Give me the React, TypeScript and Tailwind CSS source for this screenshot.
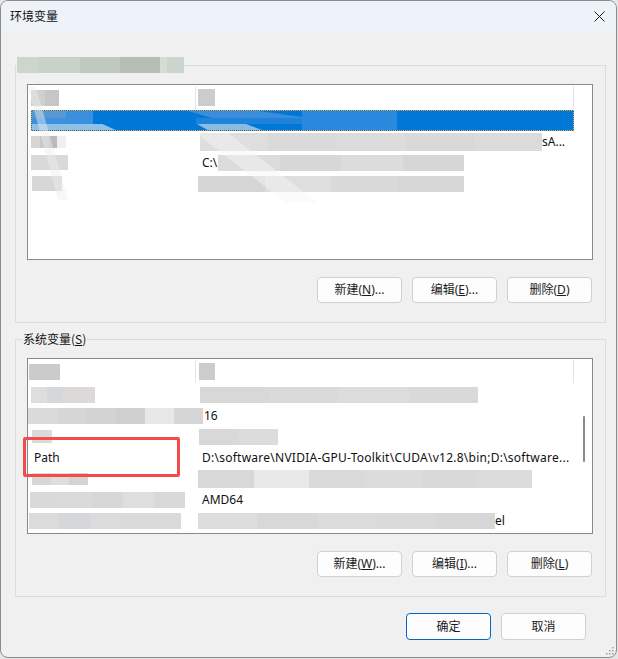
import React from "react";

type BlurProps = { w: number; h?: number; ml?: number; cols?: string[] };

// pixelated redaction block
function Blur({ w, h = 16, ml = 0, cols = ["#d9d9d9"] }: BlurProps) {
  return (
    <div className="flex shrink-0" style={{ width: w, height: h, marginLeft: ml }}>
      {cols.map((c, i) => (
        <div key={i} className="flex-1 h-full" style={{ background: c }} />
      ))}
    </div>
  );
}

function Row({
  c1,
  c2,
  header = false,
}: {
  c1: React.ReactNode;
  c2: React.ReactNode;
  header?: boolean;
}) {
  return (
    <div className={`flex ml-[3px] w-[543px] ${header ? "h-[25px]" : "h-[21px]"}`}>
      <div
        className={`w-[165px] shrink-0 flex items-center ${
          header ? "border-r border-[#e5e5e5] my-[1px]" : ""
        }`}
      >
        {c1}
      </div>
      <div
        className={`flex-1 flex items-center min-w-0 ${
          header ? "border-r border-[#e5e5e5] my-[1px]" : ""
        }`}
      >
        {c2}
      </div>
    </div>
  );
}

function Btn({ children, primary = false, tall = false }: { children: React.ReactNode; primary?: boolean; tall?: boolean }) {
  return (
    <button
      className={`w-[85px] ${tall ? "h-[27px]" : "h-[26px]"} rounded-[4px] bg-[#fdfdfd] text-[12px] text-[#1b1b1b] flex items-center justify-center border ${
        primary ? "border-[#0067c0]" : "border-[#d0d0d0]"
      }`}
    >
      {children}
    </button>
  );
}

function T({ children, ml = 0, wide = false }: { children: React.ReactNode; ml?: number; wide?: boolean }) {
  return (
    <span
      className={`text-[12px] text-[#111] whitespace-nowrap leading-none ${wide ? "tracking-[0.25px]" : ""}`}
      style={{ marginLeft: ml }}
    >
      {children}
    </span>
  );
}

function SelectedRow() {
  return (
    <div className="relative ml-[3px] w-[543px] h-[21px] bg-[#0078d7] border border-dotted border-[#e9a64a] overflow-hidden">
      <div className="absolute left-0 top-0 w-[34px] h-[7px] bg-[#5797d4]" />
      <div className="absolute left-0 top-[7px] w-[34px] h-[7px] bg-[#3d92df]" />
      <div className="absolute left-[34px] top-0 w-[27px] h-[13px] bg-[#3a8fdf]" />
      <div className="absolute left-0 top-[13px] w-[88px] h-[8px] bg-[#8ec0e8] [clip-path:polygon(0_0,80%_0,100%_100%,0_100%)]" />
      <div className="absolute left-[156px] top-0 w-[120px] h-[7px] bg-[#3a8cdc] [clip-path:polygon(0_0,60%_0,100%_100%,20%_100%)]" />
      <div className="absolute left-[165px] top-[13px] w-[70px] h-[8px] bg-[#8abbe5] [clip-path:polygon(0_0,70%_0,100%_100%,20%_100%)]" />
      <div className="absolute left-[270px] top-0 w-[95px] h-[19px] bg-[#2a89dd]" />
      <div className="absolute left-[164px] top-[7px] w-[106px] h-[6px] bg-[#1f83da]" />
    </div>
  );
}

export default function App() {
  return (
    <div className="w-[618px] h-[659px] bg-[#e6e6e6] font-['Noto_Sans','Noto_Sans_CJK_SC',sans-serif] text-[#111]">
      <div className="w-[617px] h-[658px] rounded-[8px] border border-[#8c8c8c] bg-[#f0f0f0] overflow-hidden flex flex-col relative">
        {/* title bar */}
        <div className="h-[30px] bg-[#eef3f9] flex items-center justify-between pl-[9px] pr-[10px] shrink-0">
          <span className="text-[12px] font-['Noto_Sans_CJK_SC',sans-serif] text-[#111]">环境变量</span>
          <svg width="11" height="11" viewBox="0 0 11 11" className="mr-[1px]">
            <path d="M0.5 0.5 L10.5 10.5 M10.5 0.5 L0.5 10.5" stroke="#1a1a1a" strokeWidth="1" />
          </svg>
        </div>

        {/* user variables group */}
        <div className="relative ml-[14px] mt-[34px] w-[591px] h-[258px] border border-[#dcdcdc] pt-[18px] pl-[11px] pr-[13px] flex flex-col">
          <div className="absolute left-[1px] top-[-9px] flex w-[167px] h-[16px]">
            <div className="w-[22px] bg-[#cdd6ce]" />
            <div className="w-[41px] bg-[#c9d2ca]" />
            <div className="w-[40px] bg-[#c0c9c1]" />
            <div className="w-[40px] bg-[#b5bdb5]" />
            <div className="w-[7px] bg-[#d5ddd6]" />
            <div className="w-[17px] bg-[#ccd5cd]" />
          </div>

          <div className="relative w-[566px] h-[176px] bg-white border border-[#858a91] overflow-hidden">
            <Row
              header
              c1={<Blur w={28} h={16} ml={0} cols={["#cfcfcf", "#c6c6c6"]} />}
              c2={<Blur w={17} h={17} ml={2} cols={["#cccccc"]} />}
            />
            <SelectedRow />
            <Row
              c1={<Blur w={35} h={12} cols={["#d8d4d3", "#c9c7c9", "#bcb9bb", "#f0f0f0"]} />}
              c2={
                <>
                  <Blur w={342} h={18} ml={4} cols={["#dedede", "#dadada", "#dcdcdc", "#d9d9d9", "#dbdbdb"]} />
                  <T>sA...</T>
                </>
              }
            />
            <Row
              c1={<Blur w={37} h={15} cols={["#d9d9d9"]} />}
              c2={
                <>
                  <T ml={6}>C:\</T>
                  <Blur w={246} h={16} ml={1} cols={["#dcdcdc", "#d9d7d6", "#dcdcdc", "#d6d6d6"]} />
                </>
              }
            />
            <Row
              c1={<Blur w={30} h={15} ml={1} cols={["#d7d7d7"]} />}
              c2={<Blur w={266} h={16} ml={2} cols={["#d5d5d5", "#dedede", "#d9d9d9", "#d7d7d7"]} />}
            />
            {/* smear of the redaction tool */}
            <svg className="absolute left-0 top-0 pointer-events-none" width="566" height="176">
              <polygon points="0,2 8,2 40,115 30,115" fill="#eeeeee" opacity="0.45" />
              <polygon points="168,48 200,48 290,118 258,118" fill="#f7f7f7" opacity="0.45" />
            </svg>
          </div>

          <div className="flex justify-end gap-[10px] mt-[17px]">
            <Btn>新建(<u>N</u>)...</Btn>
            <Btn>编辑(<u>E</u>)...</Btn>
            <Btn>删除(<u>D</u>)</Btn>
          </div>
        </div>

        {/* system variables group */}
        <div className="relative ml-[14px] mt-[16px] w-[591px] h-[258px] border border-[#dcdcdc] pt-[18px] pl-[11px] pr-[13px] flex flex-col">
          <span className="absolute left-[6px] top-[-9px] px-[1px] bg-[#f0f0f0] text-[12px] leading-[16px] font-['Noto_Sans_CJK_SC',sans-serif]">
            系统变量(<u>S</u>)
          </span>

          <div className="relative w-[566px] h-[176px] bg-white border border-[#858a91] overflow-hidden">
            <Row
              header
              c1={<Blur w={31} h={16} ml={-2} cols={["#cbcbcb"]} />}
              c2={<Blur w={16} h={17} ml={3} cols={["#cccccc"]} />}
            />
            <Row
              c1={<Blur w={64} h={16} cols={["#dedede", "#d4d7db", "#dcdad8", "#dcdad8"]} />}
              c2={<Blur w={278} h={16} ml={4} cols={["#d8d8d8", "#dadada", "#dddddd", "#d9d9d9"]} />}
            />
            <Row
              c1={<Blur w={175} h={16} ml={-3} cols={["#dadada", "#d6d6d6", "#d3d3d3", "#cfcfcf", "#e6e7e9", "#d6d6d6"]} />}
              c2={<T ml={8}>16</T>}
            />
            <Row
              c1={<Blur w={20} h={13} ml={1} cols={["#dadada"]} />}
              c2={<Blur w={79} h={16} ml={3} cols={["#d8d8d8", "#dcdcdc"]} />}
            />
            <Row c1={<T ml={3}>Path</T>} c2={<T ml={6} wide>D:\software\NVIDIA-GPU-Toolkit\CUDA\v12.8\bin;D:\software...</T>} />
            <Row
              c1={<Blur w={56} h={12} ml={1} cols={["#d6d6d6", "#dedede", "#d4d4d4"]} />}
              c2={<Blur w={334} h={18} ml={2} cols={["#d8d8d8", "#e8e9e9", "#dadada", "#dcdcdc", "#d9d9d9", "#dbdbdb"]} />}
            />
            <Row
              c1={<Blur w={155} h={16} ml={-1} cols={["#d9d9d9", "#dadada", "#d7d7d7", "#dedede", "#d9d9d9"]} />}
              c2={<T ml={6}>AMD64</T>}
            />
            <Row
              c1={<Blur w={152} h={16} ml={-2} cols={["#dbdbdb", "#d5d7da", "#dcdcdc", "#dadada", "#dadada"]} />}
              c2={
                <>
                  <Blur w={297} h={16} ml={2} cols={["#dddddd", "#d8d8d8", "#dbdbdb", "#dadada", "#d7d7d7"]} />
                  <T>el</T>
                </>
              }
            />
            <div className="absolute left-[555px] top-[57px] w-[2px] h-[46px] rounded-full bg-[#8a8a8a]" />
          </div>

          <div className="flex justify-end gap-[10px] mt-[17px]">
            <Btn>新建(<u>W</u>)...</Btn>
            <Btn>编辑(<u>I</u>)...</Btn>
            <Btn>删除(<u>L</u>)</Btn>
          </div>

          {/* annotation */}
          <div className="absolute left-[7px] top-[97px] w-[157px] h-[40px] border-[3px] border-[#f24c4c] rounded-[2px]" />
        </div>

        {/* dialog buttons */}
        <div className="flex justify-end gap-[10px] mt-[16px] pr-[30px]">
          <Btn primary tall>确定</Btn>
          <Btn tall>取消</Btn>
        </div>

        <svg className="absolute right-[2px] bottom-[2px]" width="10" height="10" viewBox="0 0 10 10">
          <rect x="8" y="2" width="1.5" height="1.5" fill="#9a9a9a" />
          <rect x="5" y="5" width="1.5" height="1.5" fill="#9a9a9a" />
          <rect x="8" y="5" width="1.5" height="1.5" fill="#9a9a9a" />
          <rect x="2" y="8" width="1.5" height="1.5" fill="#9a9a9a" />
          <rect x="5" y="8" width="1.5" height="1.5" fill="#9a9a9a" />
          <rect x="8" y="8" width="1.5" height="1.5" fill="#9a9a9a" />
        </svg>
      </div>
    </div>
  );
}
